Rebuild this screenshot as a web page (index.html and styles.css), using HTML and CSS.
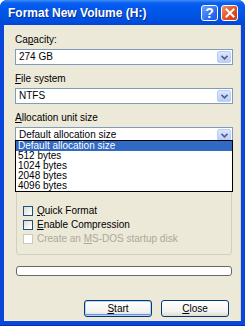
FILE: index.html
```html
<!DOCTYPE html>
<html lang="en">
<head>
  <meta charset="UTF-8" />
  <title>Format New Volume (H:)</title>
  <link rel="stylesheet" href="styles.css">
</head>
<body>
  <div class="window">
    <div class="titlebar">
      <span class="title">Format New Volume (H:)</span>
      <div class="caption-buttons">
        <span class="cap-btn help">?</span>
        <span class="cap-btn close">
          <svg viewBox="0 0 10 10" width="10" height="10">
            <path d="M1.5 1.5 L8.5 8.5 M8.5 1.5 L1.5 8.5" stroke="#fff" stroke-width="2" stroke-linecap="square" />
          </svg>
        </span>
      </div>
    </div>

    <div class="client">
      <div class="field-label first">Ca<u>p</u>acity:</div>
      <div class="combo">
        <span class="value">274 GB</span>
        <span class="drop"><svg viewBox="0 0 7 5" width="7" height="5"><path d="M0.5 0.8 L3.5 3.8 L6.5 0.8" fill="none" stroke="#4d6185" stroke-width="1.6" /></svg></span>
      </div>

      <div class="field-label"><u>F</u>ile system</div>
      <div class="combo">
        <span class="value">NTFS</span>
        <span class="drop"><svg viewBox="0 0 7 5" width="7" height="5"><path d="M0.5 0.8 L3.5 3.8 L6.5 0.8" fill="none" stroke="#4d6185" stroke-width="1.6" /></svg></span>
      </div>

      <div class="field-label"><u>A</u>llocation unit size</div>
      <div class="combo-wrap">
        <div class="combo">
          <span class="value">Default allocation size</span>
          <span class="drop"><svg viewBox="0 0 7 5" width="7" height="5"><path d="M0.5 0.8 L3.5 3.8 L6.5 0.8" fill="none" stroke="#4d6185" stroke-width="1.6" /></svg></span>
        </div>
        <ul class="droplist">
          <li class="selected">Default allocation size</li>
          <li>512 bytes</li>
          <li>1024 bytes</li>
          <li>2048 bytes</li>
          <li>4096 bytes</li>
        </ul>
      </div>

      <div class="options">
        <label class="check"><span class="box"></span><span><u>Q</u>uick Format</span></label>
        <label class="check"><span class="box"></span><span><u>E</u>nable Compression</span></label>
        <label class="check disabled"><span class="box"></span><span>Create an <u>M</u>S-DOS startup disk</span></label>
      </div>

      <div class="progress"></div>

      <div class="actions">
        <button class="btn default"><u>S</u>tart</button>
        <button class="btn"><u>C</u>lose</button>
      </div>
    </div>
  </div>
</body>
</html>
```

FILE: styles.css
```css
* { box-sizing: border-box; margin: 0; padding: 0; }
body {
  background: #fff;
  font-family: 'Liberation Sans', Arial, sans-serif;
  font-size: 10px;
  color: #000;
}
u { text-decoration: underline; text-underline-offset: 1px; }

.window {
  width: 245px; height: 326px;
  background: #0a46da;
  border-radius: 7px 7px 0 0;
  padding: 0 4px 4px 4px;
  display: flex; flex-direction: column;
  border-bottom: 1px solid #0030b8;
}

.titlebar {
  height: 25px; margin: 0 -4px;
  border-radius: 7px 7px 0 0;
  background: linear-gradient(#3d8ff8 0, #0a5ff0 3px, #0058ee 8px, #0055e5 60%, #0047d8 100%);
  display: flex; align-items: center; justify-content: space-between;
  padding: 0 7px 0 8px;
}
.title {
  color: #fff; font-weight: 700; font-size: 12px;
  text-shadow: 1px 1px 0 #0a2a8a;
  padding-top: 1px;
}
.caption-buttons { display: flex; gap: 3px; padding-top: 1px; }
.cap-btn {
  width: 17px; height: 16px;
  border: 1px solid #fff; border-radius: 3px;
  display: flex; align-items: center; justify-content: center;
  color: #fff; font-weight: 700; font-size: 14px;
}
.help { background: linear-gradient(135deg, #6ea2fb, #2d6ff2 60%, #1c57e0); }
.close { background: linear-gradient(135deg, #f09070, #e0501f 55%, #c83a12); }

.client {
  flex: 1;
  background: #ece9d8;
  padding: 8px 8px 0 11px;
  display: flex; flex-direction: column;
  border-right: 1px solid #d8d2bd;
  border-bottom: 1px solid #f4f2e8;
}

.field-label { line-height: 12px; margin-top: 8px; }
.field-label.first { margin-top: 1px; }

.combo {
  margin-top: 3px;
  width: 218px; height: 16px;
  background: #fff; border: 1px solid #7f9db9;
  display: flex; align-items: center; justify-content: space-between;
  padding: 1px 1px 1px 3px;
}
.combo .value { line-height: 12px; }
.drop {
  width: 14px; height: 12px;
  border: 1px solid #b9cef8; border-radius: 2px;
  background: linear-gradient(#dbe6fd, #bccdf8);
  display: flex; align-items: center; justify-content: center;
}

.combo-wrap { position: relative; }
.droplist {
  position: absolute; top: 16px; left: 0; z-index: 2;
  width: 218px;
  list-style: none;
  background: #fff; border: 1px solid #000;
}
.droplist li { line-height: 10px; height: 10px; padding-left: 2px; }
.droplist li.selected { background: #316ac5; color: #fff; }

.options {
  margin-top: 44px; margin-left: 1px;
  width: 216px;
  border: 1px solid #d0d0bf; border-radius: 3px;
  padding: 16px 0 8px 6px;
  display: flex; flex-direction: column;
}
.check { display: flex; align-items: center; height: 14px; line-height: 12px; }
.box {
  width: 10px; height: 10px; margin-right: 4px;
  border: 1px solid #1c5180;
  background: linear-gradient(135deg, #dcdcd7, #f6f6f4 70%, #fff);
}
.check.disabled { color: #aca899; }
.check.disabled .box { border-color: #cac8bb; background: #fff; }

.progress {
  margin-top: 11px; margin-left: 1px;
  width: 216px; height: 10px;
  border: 1px solid #686868; border-radius: 3px;
  background: #fff;
}

.actions {
  margin-top: 24px;
  display: flex; justify-content: flex-end; gap: 9px;
  padding-right: 3px;
}
.btn {
  width: 68px; height: 17px;
  font-family: inherit; font-size: 10px; color: #000;
  border: 1px solid #003c74; border-radius: 3px;
  background: linear-gradient(#fff, #f3f3ef 70%, #dcdcd4);
}
.btn.default { box-shadow: inset 0 0 0 1px #b8d1f8, inset 0 -1px 0 1px #6d8ee8; }
```
